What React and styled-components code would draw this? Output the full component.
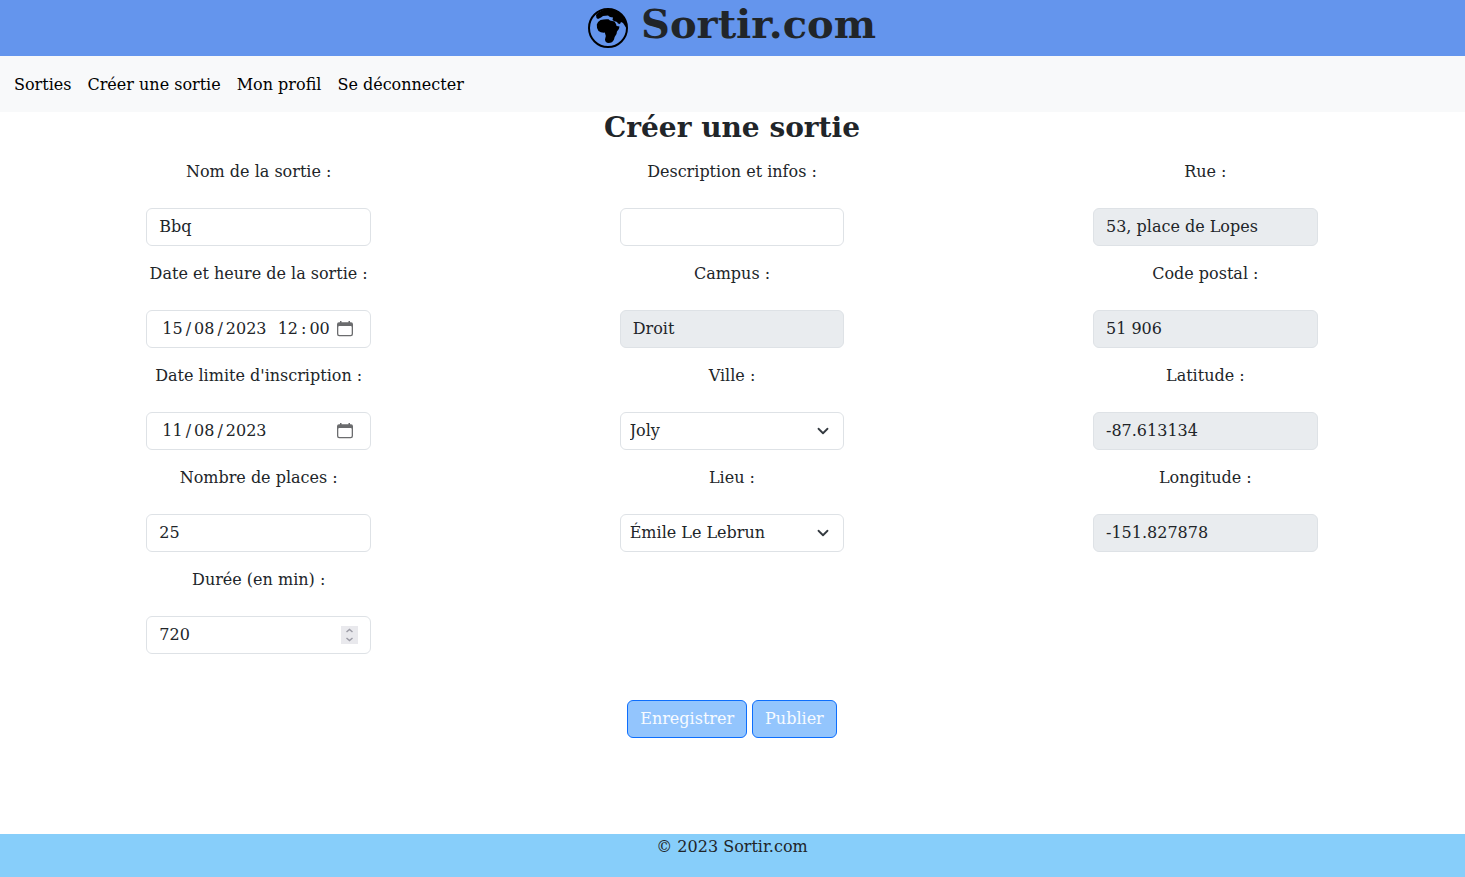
import React, { useState } from "react";
import styled, { createGlobalStyle, css } from "styled-components";

const GlobalStyle = createGlobalStyle`
  *, *::before, *::after { box-sizing: border-box; }
  body {
    margin: 0;
    background: #fff;
    color: #212529;
    font-family: "DejaVu Serif", serif;
    font-size: 16px;
    line-height: 24px;
  }
  input, select, button { font: inherit; color: inherit; }
`;

const Page = styled.div`
  min-height: 100vh;
  display: flex;
  flex-direction: column;
`;

const Header = styled.header`
  display: flex;
  justify-content: center;
  align-items: flex-start;
  gap: 13px;
  height: 56px;
  padding-right: 1px;
  background: #6495ed;
`;

const Logo = styled.svg`
  width: 40px;
  height: 40px;
  margin-top: 8px;
`;

const Brand = styled.h1`
  margin: 0;
  font-size: 40px;
  line-height: 48px;
  font-weight: bold;
`;

const Nav = styled.nav`
  display: flex;
  align-items: center;
  gap: 16px;
  height: 56px;
  padding: 2px 14px 0;
  background: #f8f9fa;
`;

const NavLink = styled.a`
  color: #000;
  text-decoration: none;
`;

const Main = styled.main`
  flex: 1;
  padding-right: 1px;
`;

const Title = styled.h2`
  margin: 0 0 16px;
  font-size: 28px;
  line-height: 32px;
  text-align: center;
`;

const Columns = styled.div`
  display: grid;
  grid-template-columns: repeat(3, 1fr);
  gap: 24px;
  padding: 0 34px;
`;

const Column = styled.div`
  display: flex;
  flex-direction: column;
  gap: 16px;
`;

const FieldBox = styled.div`
  display: flex;
  flex-direction: column;
  align-items: center;
  gap: 24px;
`;

const labelStyle = css`
  white-space: nowrap;
`;

const Label = styled.label`
  ${labelStyle}
`;

const GroupLabel = styled.span`
  ${labelStyle}
`;

const frame = css`
  width: 50%;
  height: 38px;
  border: 1px solid #dee2e6;
  border-radius: 6px;
  background-color: #fff;
`;

const Input = styled.input`
  ${frame}
  padding: 0 12px 2px;
  opacity: 1;

  &:disabled {
    background-color: #e9ecef;
    color: #212529;
  }
`;

const SelectFrame = styled.div`
  ${frame}
  display: grid;
  align-items: center;
`;

const Select = styled.select`
  grid-area: 1 / 1;
  appearance: none;
  width: 100%;
  height: 36px;
  padding: 0 36px 0 9px;
  border: 0;
  background: transparent;
`;

const Chevron = styled.svg`
  grid-area: 1 / 1;
  justify-self: end;
  width: 12px;
  height: 12px;
  margin-right: 14px;
  pointer-events: none;
`;

const Group = styled.div`
  ${frame}
  display: flex;
  align-items: center;
  padding: 0 12px;
`;

const Segment = styled.input`
  flex: none;
  width: calc(${(p) => p.$digits}ch + 6px);
  padding: 0 3px;
  border: 0;
  background: transparent;
`;

const Separator = styled.span`
  white-space: pre;
`;

const PickerButton = styled.button`
  display: flex;
  width: 16px;
  height: 16px;
  margin: 0 5px 0 auto;
  padding: 0;
  border: 0;
  background: none;
`;

const NumberInput = styled.input`
  flex: 1;
  min-width: 0;
  padding: 0;
  border: 0;
  background: transparent;
  appearance: textfield;

  &::-webkit-inner-spin-button { appearance: none; margin: 0; }
`;

const Spinner = styled.div`
  display: flex;
  flex-direction: column;
  width: 17px;
  height: 18px;
  background: #e9e9ed;
`;

const SpinButton = styled.button`
  display: flex;
  align-items: center;
  justify-content: center;
  height: 9px;
  padding: 0;
  border: 0;
  background: none;
`;

const Actions = styled.div`
  display: flex;
  justify-content: center;
  gap: 5px;
  padding: 46px 0;
`;

const Button = styled.button`
  height: 38px;
  padding: 0 12px;
  border: 1px solid #0d6efd;
  border-radius: 6px;
  background: #93c5fd;
  color: #f8fbff;
`;

const Footer = styled.footer`
  height: 43px;
  padding: 1px 1px 0 0;
  background: #87cefa;
  text-align: center;
`;

function Globe() {
  return (
    <Logo viewBox="0 0 40 40" aria-hidden="true">
      <circle cx="20" cy="20" r="19" fill="none" stroke="#000" strokeWidth="2" />
      <path d="M8 7C12 2 18 1 22 1C31 2 38 9 39 18L38 19.500L36 16.500L35 15L33 14L32 16L30 15.500L29 14L26 13L24.500 12L25 9.500L22 9L20 7.500L15 8L13 9.500L10 11L8.500 10Z" />
      <path d="M12.500 12Q17 10.800 20.500 11.300L22 12.500L26.500 13.500Q28 15.500 28.600 18L31.500 18.500Q31.500 21 29 23.500L28.500 26Q26.500 28.500 26 31.500Q24.500 35 20.500 35Q17.200 34.800 17 31.500L17.800 28L16.800 24.600Q13 25 10.500 23Q8.500 21 8.800 16.500Q9.500 13.500 12.500 12Z" />
    </Logo>
  );
}

function CalendarIcon() {
  return (
    <svg width="16" height="16" viewBox="0 0 16 16" aria-hidden="true">
      <path fill="#6b6c6e" fillRule="evenodd" d="M3 0h1.500v1.300h7V0H13v1.300h1a2 2 0 0 1 2 2V13a2.200 2.200 0 0 1-2.200 2.200H2.200A2.200 2.200 0 0 1 0 13V3.300a2 2 0 0 1 2-2h1ZM1.300 6v6.800a1.200 1.200 0 0 0 1.200 1.200h11a1.200 1.200 0 0 0 1.200-1.200V6a1 1 0 0 0-1-1H2.300a1 1 0 0 0-1 1Z" />
    </svg>
  );
}

function Arrow({ down }) {
  return (
    <svg width="9" height="5" viewBox="0 0 9 5" aria-hidden="true">
      <path d={down ? "M1.500 1l3 2.500 3-2.500" : "M1.500 4l3-2.500 3 2.500"} fill="none" stroke="#9c9ca6" strokeWidth="1.5" />
    </svg>
  );
}

function TextField({ id, label, value, disabled }) {
  return (
    <FieldBox>
      <Label htmlFor={id}>{label}</Label>
      <Input id={id} type="text" defaultValue={value} disabled={disabled} />
    </FieldBox>
  );
}

function SelectField({ id, label, options }) {
  return (
    <FieldBox>
      <Label htmlFor={id}>{label}</Label>
      <SelectFrame>
        <Select id={id}>
          {options.map((o) => <option key={o}>{o}</option>)}
        </Select>
        <Chevron viewBox="0 0 16 16" aria-hidden="true">
          <path d="m2 5 6 6 6-6" fill="none" stroke="#343a40" strokeWidth="2.400" strokeLinecap="round" strokeLinejoin="round" />
        </Chevron>
      </SelectFrame>
    </FieldBox>
  );
}

function DateField({ id, label, parts }) {
  return (
    <FieldBox>
      <GroupLabel id={id}>{label}</GroupLabel>
      <Group role="group" aria-labelledby={id}>
        {parts.map(([name, value, separator]) => (
          <React.Fragment key={name}>
            <Segment
              type="text"
              inputMode="numeric"
              aria-label={name}
              defaultValue={value}
              maxLength={value.length}
              $digits={value.length}
            />
            {separator && <Separator>{separator}</Separator>}
          </React.Fragment>
        ))}
        <PickerButton type="button" aria-label="Ouvrir le calendrier">
          <CalendarIcon />
        </PickerButton>
      </Group>
    </FieldBox>
  );
}

function NumberField({ id, label, initial }) {
  const [value, setValue] = useState(initial);
  return (
    <FieldBox>
      <Label htmlFor={id}>{label}</Label>
      <Group>
        <NumberInput id={id} type="number" value={value} onChange={(e) => setValue(e.target.value)} />
        <Spinner>
          <SpinButton type="button" aria-label="Augmenter" onClick={() => setValue(Number(value) + 1)}>
            <Arrow />
          </SpinButton>
          <SpinButton type="button" aria-label="Diminuer" onClick={() => setValue(Number(value) - 1)}>
            <Arrow down />
          </SpinButton>
        </Spinner>
      </Group>
    </FieldBox>
  );
}

export default function App() {
  return (
    <Page>
      <GlobalStyle />
      <Header>
        <Globe />
        <Brand>Sortir.com</Brand>
      </Header>
      <Nav>
        <NavLink href="#sorties">Sorties</NavLink>
        <NavLink href="#creer">Créer une sortie</NavLink>
        <NavLink href="#profil">Mon profil</NavLink>
        <NavLink href="#deconnexion">Se déconnecter</NavLink>
      </Nav>
      <Main>
        <Title>Créer une sortie</Title>
        <form onSubmit={(e) => e.preventDefault()}>
          <Columns>
            <Column>
              <TextField id="nom" label="Nom de la sortie :" value="Bbq" />
              <DateField
                id="debut"
                label="Date et heure de la sortie :"
                parts={[["Jour", "15", "/"], ["Mois", "08", "/"], ["Année", "2023", " "], ["Heures", "12", ":"], ["Minutes", "00"]]}
              />
              <DateField
                id="limite"
                label="Date limite d'inscription :"
                parts={[["Jour", "11", "/"], ["Mois", "08", "/"], ["Année", "2023"]]}
              />
              <TextField id="places" label="Nombre de places :" value="25" />
              <NumberField id="duree" label="Durée (en min) :" initial={720} />
            </Column>
            <Column>
              <TextField id="description" label="Description et infos :" value="" />
              <TextField id="campus" label="Campus :" value="Droit" disabled />
              <SelectField id="ville" label="Ville :" options={["Joly"]} />
              <SelectField id="lieu" label="Lieu :" options={["Émile Le Lebrun"]} />
            </Column>
            <Column>
              <TextField id="rue" label="Rue :" value="53, place de Lopes" disabled />
              <TextField id="code-postal" label="Code postal :" value="51 906" disabled />
              <TextField id="latitude" label="Latitude :" value="-87.613134" disabled />
              <TextField id="longitude" label="Longitude :" value="-151.827878" disabled />
            </Column>
          </Columns>
          <Actions>
            <Button type="submit">Enregistrer</Button>
            <Button type="submit">Publier</Button>
          </Actions>
        </form>
      </Main>
      <Footer>© 2023 Sortir.com</Footer>
    </Page>
  );
}
